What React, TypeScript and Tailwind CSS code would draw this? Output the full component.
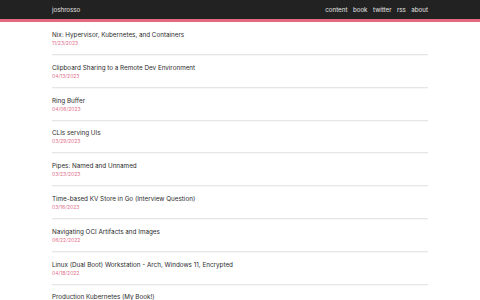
import React from 'react';

const posts = [
  { title: 'Nix: Hypervisor, Kubernetes, and Containers', date: '11/23/2023' },
  { title: 'Clipboard Sharing to a Remote Dev Environment', date: '04/13/2023' },
  { title: 'Ring Buffer', date: '04/06/2023' },
  { title: 'CLIs serving UIs', date: '03/29/2023' },
  { title: 'Pipes: Named and Unnamed', date: '03/23/2023' },
  { title: 'Time-based KV Store in Go (Interview Question)', date: '03/16/2023' },
  { title: 'Navigating OCI Artifacts and Images', date: '06/22/2022' },
  { title: 'Linux (Dual Boot) Workstation - Arch, Windows 11, Encrypted', date: '04/18/2022' },
  { title: 'Production Kubernetes (My Book!)', date: '08/17/2021' },
];

const links = ['content', 'book', 'twitter', 'rss', 'about'];

const App = () => (
  <div className="min-h-screen bg-white font-['Inter','Liberation_Sans',sans-serif]">
    <header className="bg-[#222222] border-b-[3px] border-[#e4687f]">
      <div className="mx-auto w-[376px] h-[19px] flex items-center justify-between text-[6.2px] text-[#e6e6e6]">
        <span>joshrosso</span>
        <nav className="flex gap-[5.5px]">
          {links.map((l) => (
            <span key={l}>{l}</span>
          ))}
        </nav>
      </div>
    </header>
    <main className="mx-auto w-[376px] pt-[8px]">
      {posts.map((p) => (
        <div key={p.title}>
          <div className="text-[6.3px] leading-[10px] text-[#2b2b2b]">{p.title}</div>
          <div className="text-[5px] leading-[7px] text-[#e0708a]">{p.date}</div>
          <div className="mt-[7px] mb-[7.8px] h-[1px] bg-[#e6e6e6] shadow-[0_1px_1px_rgba(0,0,0,0.04)]" />
        </div>
      ))}
    </main>
  </div>
);

export default App;
